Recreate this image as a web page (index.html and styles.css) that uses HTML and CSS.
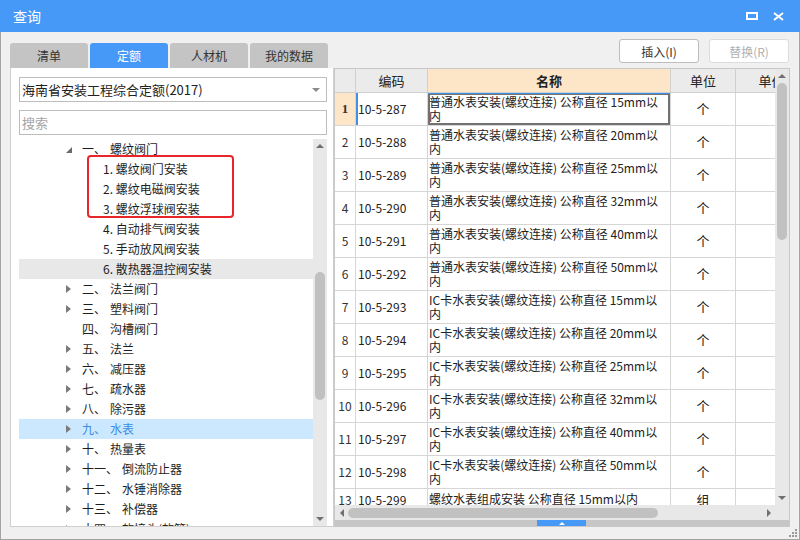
FILE: index.html
```html
<!DOCTYPE html>
<html lang="zh-CN">
<head>
    <meta charset="UTF-8">
    <meta name="viewport" content="width=device-width, initial-scale=1.0">
    <title>查询</title>
    <link rel="stylesheet" href="styles.css">
</head>
<body>
    <div class="windowCls">
        <div class="titleBarCls">
            <span class="titleCls">查询</span>
            <span class="winBtnCls"><svg width="12" height="8" viewBox="0 0 12 8"><rect x="1" y="1" width="10" height="6" fill="none" stroke="#fff" stroke-width="2"/></svg></span>
            <span class="winBtnCls"><svg width="11" height="9" viewBox="0 0 11 9"><path d="M1 1L10 8M10 1L1 8" stroke="#fff" stroke-width="2"/></svg></span>
        </div>
        <div class="contentCls">
            <div class="leftCls">
                <div class="tabsCls">
                    <div class="tabCls">清单</div>
                    <div class="tabCls activeTabCls">定额</div>
                    <div class="tabCls">人材机</div>
                    <div class="tabCls">我的数据</div>
                </div>
                <div class="panelCls">
                    <div class="selectCls">海南省安装工程综合定额(2017)<span class="selArrowCls"></span></div>
                    <div class="searchCls">搜索</div>
                    <div class="treeWrapCls">
                        <div class="treeListCls">
                            <div class="treeRow lvl1"><span class="tw down"></span><span class="num">一、</span>螺纹阀门</div>
                            <div class="treeRow lvl2">1. 螺纹阀门安装</div>
                            <div class="treeRow lvl2">2. 螺纹电磁阀安装</div>
                            <div class="treeRow lvl2">3. 螺纹浮球阀安装</div>
                            <div class="treeRow lvl2">4. 自动排气阀安装</div>
                            <div class="treeRow lvl2">5. 手动放风阀安装</div>
                            <div class="treeRow lvl2 hoverRow">6. 散热器温控阀安装</div>
                            <div class="treeRow lvl1"><span class="tw right"></span><span class="num">二、</span>法兰阀门</div>
                            <div class="treeRow lvl1"><span class="tw right"></span><span class="num">三、</span>塑料阀门</div>
                            <div class="treeRow lvl1"><span class="tw"></span><span class="num">四、</span>沟槽阀门</div>
                            <div class="treeRow lvl1"><span class="tw right"></span><span class="num">五、</span>法兰</div>
                            <div class="treeRow lvl1"><span class="tw right"></span><span class="num">六、</span>减压器</div>
                            <div class="treeRow lvl1"><span class="tw right"></span><span class="num">七、</span>疏水器</div>
                            <div class="treeRow lvl1"><span class="tw right"></span><span class="num">八、</span>除污器</div>
                            <div class="treeRow lvl1 selRow"><span class="tw right"></span><span class="num">九、</span>水表</div>
                            <div class="treeRow lvl1"><span class="tw right"></span><span class="num">十、</span>热量表</div>
                            <div class="treeRow lvl1"><span class="tw right"></span><span class="num">十一、</span>倒流防止器</div>
                            <div class="treeRow lvl1"><span class="tw right"></span><span class="num">十二、</span>水锤消除器</div>
                            <div class="treeRow lvl1"><span class="tw right"></span><span class="num">十三、</span>补偿器</div>
                            <div class="treeRow lvl1"><span class="tw right"></span><span class="num">十四、</span>软接头(软管)</div>
                            <div class="redBoxCls"></div>
                        </div>
                        <div class="scrollVCls treeScroll">
                            <div class="arrowBox"><span class="upTri"></span></div>
                            <div class="thumbV"></div>
                            <div class="spacer"></div>
                            <div class="arrowBox"><span class="downTri"></span></div>
                        </div>
                    </div>
                </div>
            </div>
            <div class="rightCls">
                <div class="toolbarCls">
                    <button class="btn">插入(I)</button>
                    <button class="btn btnDisabled">替换(R)</button>
                </div>
                <div class="gridCls">
                    <div class="gridMainCls">
                        <div class="gridBodyCls">
                            <div class="gRow headRow">
                                <div class="c"></div>
                                <div class="c">编码</div>
                                <div class="c nameHead">名称</div>
                                <div class="c">单位</div>
                                <div class="c">单价</div>
                            </div>
                            <div class="gRow curRow">
                                <div class="c rn curRn">1</div>
                                <div class="c code curCode">10-5-287</div>
                                <div class="c name curName">普通水表安装(螺纹连接) 公称直径 15mm以<br>内</div>
                                <div class="c unit">个</div>
                                <div class="c"></div>
                            </div>
                            <div class="gRow"><div class="c rn">2</div><div class="c code">10-5-288</div><div class="c name">普通水表安装(螺纹连接) 公称直径 20mm以<br>内</div><div class="c unit">个</div><div class="c"></div></div>
                            <div class="gRow"><div class="c rn">3</div><div class="c code">10-5-289</div><div class="c name">普通水表安装(螺纹连接) 公称直径 25mm以<br>内</div><div class="c unit">个</div><div class="c"></div></div>
                            <div class="gRow"><div class="c rn">4</div><div class="c code">10-5-290</div><div class="c name">普通水表安装(螺纹连接) 公称直径 32mm以<br>内</div><div class="c unit">个</div><div class="c"></div></div>
                            <div class="gRow"><div class="c rn">5</div><div class="c code">10-5-291</div><div class="c name">普通水表安装(螺纹连接) 公称直径 40mm以<br>内</div><div class="c unit">个</div><div class="c"></div></div>
                            <div class="gRow"><div class="c rn">6</div><div class="c code">10-5-292</div><div class="c name">普通水表安装(螺纹连接) 公称直径 50mm以<br>内</div><div class="c unit">个</div><div class="c"></div></div>
                            <div class="gRow"><div class="c rn">7</div><div class="c code">10-5-293</div><div class="c name">IC卡水表安装(螺纹连接) 公称直径 15mm以<br>内</div><div class="c unit">个</div><div class="c"></div></div>
                            <div class="gRow"><div class="c rn">8</div><div class="c code">10-5-294</div><div class="c name">IC卡水表安装(螺纹连接) 公称直径 20mm以<br>内</div><div class="c unit">个</div><div class="c"></div></div>
                            <div class="gRow"><div class="c rn">9</div><div class="c code">10-5-295</div><div class="c name">IC卡水表安装(螺纹连接) 公称直径 25mm以<br>内</div><div class="c unit">个</div><div class="c"></div></div>
                            <div class="gRow"><div class="c rn">10</div><div class="c code">10-5-296</div><div class="c name">IC卡水表安装(螺纹连接) 公称直径 32mm以<br>内</div><div class="c unit">个</div><div class="c"></div></div>
                            <div class="gRow"><div class="c rn">11</div><div class="c code">10-5-297</div><div class="c name">IC卡水表安装(螺纹连接) 公称直径 40mm以<br>内</div><div class="c unit">个</div><div class="c"></div></div>
                            <div class="gRow"><div class="c rn">12</div><div class="c code">10-5-298</div><div class="c name">IC卡水表安装(螺纹连接) 公称直径 50mm以<br>内</div><div class="c unit">个</div><div class="c"></div></div>
                            <div class="gRow shortRow"><div class="c rn">13</div><div class="c code">10-5-299</div><div class="c name">螺纹水表组成安装 公称直径 15mm以内</div><div class="c unit">组</div><div class="c"></div></div>
                        </div>
                        <div class="scrollVCls gridScroll">
                            <div class="arrowBox"><span class="upTri"></span></div>
                            <div class="thumbV"></div>
                            <div class="spacer"></div>
                            <div class="arrowBox"><span class="downTri"></span></div>
                        </div>
                    </div>
                    <div class="scrollHCls">
                        <div class="arrowBoxH"><span class="leftTri"></span></div>
                        <div class="thumbH"></div>
                        <div class="spacer"></div>
                        <div class="arrowBoxH"><span class="rightTri"></span></div>
                        <div class="cornerCls"></div>
                    </div>
                    <div class="splitterCls"><div class="splitHandle"><span class="smallTri"></span></div></div>
                </div>
            </div>
        </div>
        <div class="gripCls"><svg width="9" height="9" viewBox="0 0 9 9" fill="#9a9a9a"><rect x="7" y="1" width="2" height="2"/><rect x="4" y="4" width="2" height="2"/><rect x="7" y="4" width="2" height="2"/><rect x="1" y="7" width="2" height="2"/><rect x="4" y="7" width="2" height="2"/><rect x="7" y="7" width="2" height="2"/></svg></div>
    </div>
</body>
</html>
```

FILE: styles.css
```css
*{margin:0px;padding:0px;box-sizing:border-box;}
body{width:800px;height:540px;font-family:"Noto Sans CJK SC","Microsoft YaHei",sans-serif;color:#222;overflow:hidden;}
.windowCls{position:relative;width:800px;height:540px;border:1px solid #a3a3a3;border-top:none;background-color:#f0f0f0;display:flex;flex-direction:column;}
.titleBarCls{flex-shrink:0;height:32px;background-color:#4799f8;display:flex;align-items:center;padding:0 9px 0 13px;margin:0 -1px;}
.titleCls{flex:1;color:#fff;font-size:14px;line-height:20px;}
.winBtnCls{display:flex;align-items:center;justify-content:center;width:26px;height:20px;}
.contentCls{flex:1;min-height:0;display:flex;padding:7px 9px 12px 9px;}
.leftCls{width:324px;min-height:0;display:flex;flex-direction:column;}
.tabsCls{flex-shrink:0;display:flex;gap:2px;margin-top:4px;height:25px;}
.tabCls{width:78px;height:25px;background-color:#c4c4c4;border-radius:3px 3px 0 0;font-size:12px;line-height:25px;text-align:center;color:#333;}
.activeTabCls{background-color:#4799f8;color:#fff;}
.panelCls{flex:1;min-height:0;background-color:#fff;border:1px solid #cfcfcf;border-top:none;padding:9px 6px 0 8px;display:flex;flex-direction:column;}
.selectCls{flex-shrink:0;position:relative;height:25px;border:1px solid #bdbdbd;font-size:13px;line-height:23px;padding-left:2px;color:#222;}
.selArrowCls{position:absolute;right:6px;top:10px;border-top:4px solid #8a8a8a;border-left:4px solid transparent;border-right:4px solid transparent;}
.searchCls{flex-shrink:0;height:25px;margin-top:8px;border:1px solid #bdbdbd;font-size:13px;line-height:23px;padding-left:2px;color:#a5a5a5;}
.treeWrapCls{flex:1;min-height:0;display:flex;margin-top:4px;overflow:hidden;}
.treeListCls{position:relative;flex:1;overflow:hidden;}
.treeRow{height:20px;line-height:20px;font-size:12px;white-space:nowrap;color:#1e1e1e;}
.lvl1{padding-left:47px;}
.lvl2{padding-left:84px;}
.hoverRow{background-color:#e8e8e8;}
.selRow{background-color:#cce8ff;color:#3b8de6;}
.tw{display:inline-block;width:16px;height:20px;vertical-align:top;}
.tw.right::before{content:"";display:block;width:0;height:0;margin-top:6px;border-left:5px solid #7a7a7a;border-top:4px solid transparent;border-bottom:4px solid transparent;}
.tw.down::before{content:"";display:block;width:0;height:0;margin-top:8px;border-bottom:6px solid #6a6a6a;border-left:6px solid transparent;}
.num{margin-right:4px;}
.redBoxCls{position:absolute;left:68px;top:16px;width:147px;height:63px;border:2px solid #e8262a;border-radius:4px;}
.scrollVCls{flex-shrink:0;width:14px;background-color:#e8e8e8;display:flex;flex-direction:column;align-items:center;}
.arrowBox{flex-shrink:0;height:14px;width:14px;display:flex;align-items:center;justify-content:center;}
.upTri{border-bottom:4px solid #707070;border-left:4.5px solid transparent;border-right:4.5px solid transparent;}
.downTri{border-top:4px solid #707070;border-left:4.5px solid transparent;border-right:4.5px solid transparent;}
.thumbV{flex-shrink:0;width:10px;background-color:#c1c1c1;border-radius:5px;}
.treeScroll .thumbV{margin-top:119px;height:128px;}
.gridScroll .thumbV{height:157px;}
.spacer{flex:1;}
.rightCls{width:456px;min-height:0;display:flex;flex-direction:column;}
.toolbarCls{flex-shrink:0;height:24px;margin-bottom:5px;display:flex;justify-content:flex-end;gap:10px;padding-right:1px;}
.btn{width:80px;height:24px;background-color:#fff;border:1px solid #bdbdbd;border-radius:3px;font-family:"Noto Sans CJK SC",sans-serif;font-size:12px;color:#333;}
.btnDisabled{border-color:#dcdcdc;color:#b0b0b0;}
.gridCls{flex:1;min-height:0;border:1px solid #c8c8c8;display:flex;flex-direction:column;background-color:#fff;}
.gridMainCls{flex-shrink:0;height:436px;display:flex;overflow:hidden;}
.gridBodyCls{flex:1;overflow:hidden;}
.gRow{display:grid;grid-template-columns:21px 72px 243px 65px 72px;height:33px;border-bottom:1px solid #d6d6d6;font-size:12px;white-space:nowrap;}
.c{border-right:1px solid #d6d6d6;overflow:hidden;}
.headRow{height:24px;background-color:#ebebeb;font-size:13px;line-height:23px;text-align:center;border-bottom-color:#cfcfcf;}
.headRow .c{border-right-color:#d0d0d0;}
.nameHead{background-color:#fde6c8;font-weight:bold;}
.rn{text-align:center;line-height:32px;color:#333;}
.code{line-height:32px;padding-left:2px;}
.name{line-height:14px;padding:2px 0 0 1px;}
.unit{text-align:center;line-height:32px;font-size:13px;}
.curRn{background-color:#fde6c8;font-family:"Liberation Serif",serif;font-weight:bold;font-size:13px;}
.curCode{border-left:2px solid #3d8fe8;padding-left:0;}
.curName{box-shadow:inset 0 1px 0 #3d8fe8,inset 0 0 0 2px #727272;}
.shortRow{height:22px;}
.shortRow .rn,.shortRow .code,.shortRow .unit{line-height:22px;}
.shortRow .name{line-height:20px;padding-top:0;}
.scrollHCls{flex-shrink:0;height:15px;background-color:#e8e8e8;display:flex;align-items:center;}
.arrowBoxH{width:13px;height:15px;display:flex;align-items:center;justify-content:center;}
.leftTri{border-right:4px solid #707070;border-top:4.5px solid transparent;border-bottom:4.5px solid transparent;}
.rightTri{border-left:4px solid #707070;border-top:4.5px solid transparent;border-bottom:4.5px solid transparent;}
.thumbH{width:310px;height:10px;background-color:#c1c1c1;border-radius:5px;}
.cornerCls{width:14px;}
.splitterCls{flex-shrink:0;height:6px;background-color:#c6c6c6;padding-left:202px;}
.splitHandle{width:49px;height:6px;background-color:#4799f8;display:flex;justify-content:center;align-items:center;}
.smallTri{border-bottom:3px solid #fff;border-left:3px solid transparent;border-right:3px solid transparent;}
.gripCls{position:absolute;right:2px;bottom:2px;width:9px;height:9px;display:flex;}
```
